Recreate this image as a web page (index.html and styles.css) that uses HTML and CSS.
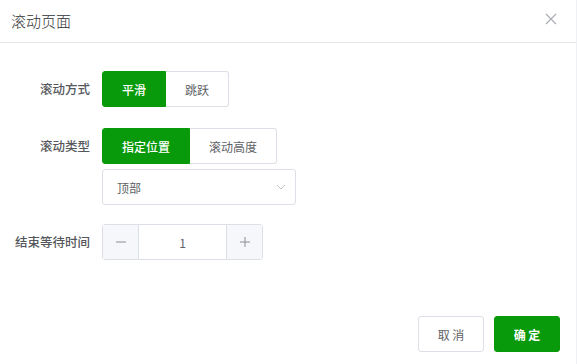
FILE: index.html
```html
<!DOCTYPE html>
<html lang="zh-CN">
<head>
    <meta charset="UTF-8">
    <title>滚动页面</title>
    <link rel="stylesheet" href="styles.css">
</head>
<body>
    <div class="dialog">
        <div class="dialog-header">
            <span class="dialog-title">滚动页面</span>
            <span class="close">
                <svg width="12" height="12" viewBox="0 0 12 12"><path d="M1 1L11 11M11 1L1 11" stroke="#a8abb2" stroke-width="1.1" fill="none"/></svg>
            </span>
        </div>

        <div class="dialog-body">
            <div class="form-row row-mode">
                <label class="form-label">滚动方式</label>
                <div class="form-control">
                    <div class="radio-group">
                        <span class="radio-btn active">平滑</span>
                        <span class="radio-btn">跳跃</span>
                    </div>
                </div>
            </div>

            <div class="form-row row-type">
                <label class="form-label">滚动类型</label>
                <div class="form-control">
                    <div class="radio-group">
                        <span class="radio-btn active">指定位置</span>
                        <span class="radio-btn">滚动高度</span>
                    </div>
                    <div class="select">
                        <span>顶部</span>
                        <svg width="12" height="12" viewBox="0 0 12 12"><path d="M2 4L6 8L10 4" stroke="#c0c4cc" stroke-width="1" fill="none"/></svg>
                    </div>
                </div>
            </div>

            <div class="form-row">
                <label class="form-label">结束等待时间</label>
                <div class="form-control">
                    <div class="number-input">
                        <span class="step minus">
                            <svg width="12" height="12" viewBox="0 0 12 12"><path d="M1 6H11" stroke="#8a8d94" stroke-width="1" fill="none"/></svg>
                        </span>
                        <span class="value">1</span>
                        <span class="step plus">
                            <svg width="12" height="12" viewBox="0 0 12 12"><path d="M1 6H11M6 1V11" stroke="#8a8d94" stroke-width="1" fill="none"/></svg>
                        </span>
                    </div>
                </div>
            </div>
        </div>

        <div class="dialog-footer">
            <button class="btn">取 消</button>
            <button class="btn primary">确 定</button>
        </div>
    </div>
</body>
</html>
```

FILE: styles.css
```css
html, body {
    margin: 0;
    padding: 0;
    background: #fff;
}
body {
    font-family: "Noto Sans CJK SC", "Noto Sans", sans-serif;
    color: #606266;
    width: 577px;
    height: 364px;
    overflow: hidden;
}
.dialog {
    height: 364px;
    display: flex;
    flex-direction: column;
    border-right: 1px solid #eef0f3;
    box-sizing: border-box;
}
.dialog-header {
    height: 42px;
    border-bottom: 1px solid #e4e6ea;
    display: flex;
    align-items: center;
    justify-content: space-between;
    padding: 0 19px 0 11px;
}
.dialog-title {
    font-size: 15px;
    font-weight: 300;
    color: #303133;
    margin-top: -2px;
}
.close {
    display: flex;
    margin-top: -4px;
}
.dialog-body {
    padding-top: 28px;
    flex: 1;
}
.form-row {
    display: flex;
    align-items: flex-start;
    margin-bottom: 19px;
}
.row-mode {
    margin-bottom: 21px;
}
.form-label {
    width: 90px;
    padding-right: 12px;
    text-align: right;
    line-height: 36px;
    font-size: 12.5px;
    font-weight: 500;
    color: #55575c;
    flex-shrink: 0;
}
.form-control {
    display: flex;
    flex-direction: column;
    align-items: flex-start;
    gap: 5px;
}
.radio-group {
    display: flex;
    height: 36px;
}
.radio-btn {
    display: flex;
    align-items: center;
    padding: 0 19px;
    font-size: 12px;
    color: #606266;
    border: 1px solid #dcdfe6;
    border-left: none;
    background: #fff;
}
.radio-btn:first-child {
    border-left: 1px solid #dcdfe6;
    border-radius: 3px 0 0 3px;
}
.radio-btn:last-child {
    border-radius: 0 3px 3px 0;
}
.radio-btn.active {
    background: #089a0a;
    border-color: #089a0a;
    color: #fff;
    font-weight: 500;
}
.select {
    width: 194px;
    height: 36px;
    box-sizing: border-box;
    border: 1px solid #dcdfe6;
    border-radius: 3px;
    display: flex;
    align-items: center;
    justify-content: space-between;
    padding: 0 8px 0 14px;
    font-size: 12px;
    color: #606266;
}
.number-input {
    width: 161px;
    height: 36px;
    box-sizing: border-box;
    border: 1px solid #dcdfe6;
    border-radius: 3px;
    display: flex;
}
.step {
    width: 35px;
    background: #f5f7fa;
    display: flex;
    align-items: center;
    justify-content: center;
}
.minus {
    border-right: 1px solid #dcdfe6;
}
.plus {
    border-left: 1px solid #dcdfe6;
}
.value {
    flex: 1;
    display: flex;
    align-items: center;
    justify-content: center;
    font-size: 12px;
    color: #606266;
}
.dialog-footer {
    display: flex;
    justify-content: flex-end;
    gap: 10px;
    padding: 0 16px 12px 0;
}
.btn {
    width: 66px;
    height: 36px;
    border: 1px solid #dcdfe6;
    border-radius: 3px;
    background: #fff;
    font-family: inherit;
    font-size: 12px;
    color: #606266;
    cursor: pointer;
}
.btn.primary {
    background: #089a0a;
    border-color: #089a0a;
    color: #fff;
    font-weight: bold;
}
```
